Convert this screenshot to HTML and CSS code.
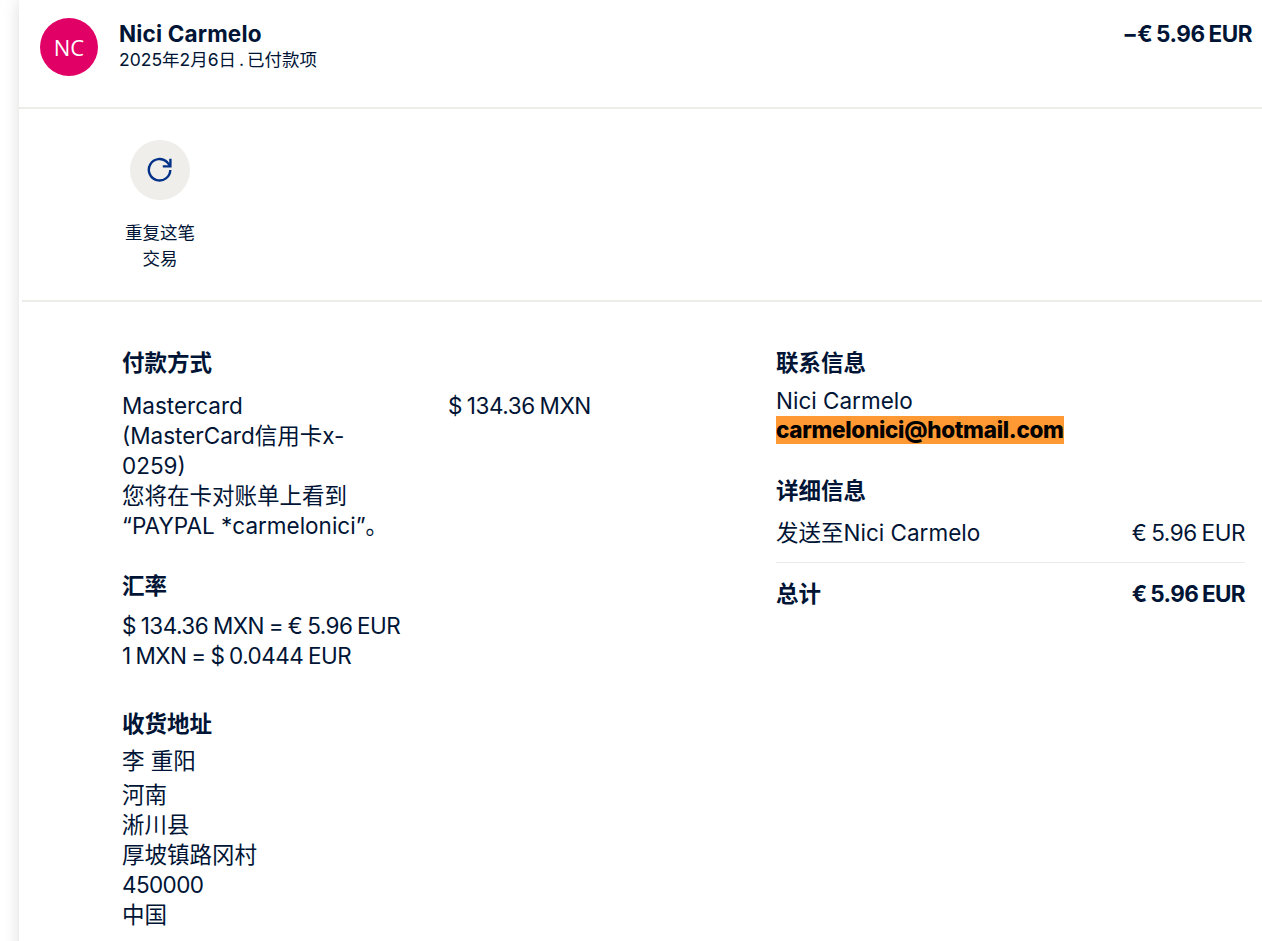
FILE: index.html
```html
<!DOCTYPE html>
<html lang="zh-CN">
<head>
    <meta charset="UTF-8">
    <meta name="viewport" content="width=device-width, initial-scale=1.0">
    <title>交易详情</title>
    <link rel="stylesheet" href="styles.css">
</head>
<body>
    <div class="panel">
        <header class="summary">
            <div class="avatar">NC</div>
            <div class="summary-text">
                <div class="summary-name">Nici Carmelo</div>
                <div class="summary-meta">2025年2月6日 . 已付款项</div>
            </div>
            <div class="summary-amount money">−€ 5.96 EUR</div>
        </header>

        <section class="actions">
            <div class="action">
                <div class="action-icon">
                    <svg width="26" height="26" viewBox="0 0 24 24" fill="none" stroke="#003087" stroke-width="2.2">
                        <path d="M21.5 12a9.9 9.9 0 1 1-2.9-7.2L21 7.6"/>
                        <path d="M21.6 1.6v7h-7"/>
                    </svg>
                </div>
                <div class="action-label">重复这笔交易</div>
            </div>
        </section>

        <main class="details">
            <div class="col-left">
                <section class="block">
                    <h3>付款方式</h3>
                    <div class="pay-row">
                        <p class="pay-card">Mastercard<br>(MasterCard信用卡x-<br>0259)<br>您将在卡对账单上看到<br>“PAYPAL *carmelonici”。</p>
                        <p class="pay-amount money">$ 134.36 MXN</p>
                    </div>
                </section>
                <section class="block block-rate">
                    <h3>汇率</h3>
                    <p class="money rate-text">$ 134.36 MXN = € 5.96 EUR<br>1 MXN = $ 0.0444 EUR</p>
                </section>
                <section class="block block-ship">
                    <h3>收货地址</h3>
                    <p class="ship-name">李 重阳</p>
                    <p>河南<br>淅川县<br>厚坡镇路冈村<br><span class="zip">450000</span><br>中国</p>
                </section>
            </div>
            <div class="col-right">
                <section class="block">
                    <h3>联系信息</h3>
                    <p>Nici Carmelo</p>
                    <p><mark class="email">carmelonici@hotmail.com</mark></p>
                </section>
                <section class="block block-info">
                    <h3>详细信息</h3>
                    <div class="line line-item">
                        <span>发送至Nici Carmelo</span>
                        <span class="money">€ 5.96 EUR</span>
                    </div>
                    <div class="line line-total">
                        <span>总计</span>
                        <span class="money">€ 5.96 EUR</span>
                    </div>
                </section>
            </div>
        </main>
    </div>
</body>
</html>
```

FILE: styles.css
```css
* {
    box-sizing: border-box;
}

html, body {
    height: 100%;
}

body {
    margin: 0;
    padding-left: 19px;
    background-color: #fff;
    color: #001435;
    font-family: Inter, "Liberation Sans", "Noto Sans CJK SC", sans-serif;
    font-size: 22.5px;
    line-height: 30px;
    overflow: hidden;
}

.panel {
    min-height: 100%;
    background: #fff;
    box-shadow: 0 0 16px rgba(0, 0, 0, 0.14);
}

.money {
    letter-spacing: -0.45px;
    word-spacing: -1px;
}

.zip {
    letter-spacing: -0.6px;
}

.summary {
    display: flex;
    height: 109px;
    padding: 19px 10px 0 21px;
    border-bottom: 2px solid #eeece8;
}

.avatar {
    display: flex;
    align-items: center;
    justify-content: center;
    flex: none;
    width: 58px;
    height: 58px;
    margin-top: -1px;
    margin-right: 21px;
    border-radius: 50%;
    background-color: #e10066;
    color: #fff;
    font-family: "Open Sans", sans-serif;
    font-size: 22px;
    font-weight: 500;
}

.summary-text {
    flex: 1;
}

.summary-name {
    font-size: 22.5px;
    font-weight: 700;
    line-height: 29px;
    letter-spacing: 0.15px;
}

.summary-meta {
    font-size: 17.5px;
    line-height: 24px;
    word-spacing: -2px;
}

.summary-amount {
    font-weight: 700;
    line-height: 29px;
}

.actions {
    height: 193px;
    margin-left: 3px;
    padding: 31px 0 0 101px;
    border-bottom: 2px solid #eeece8;
}

.action {
    width: 74px;
    text-align: center;
    font-size: 17.5px;
    line-height: 26px;
}

.action-icon {
    display: flex;
    align-items: center;
    justify-content: center;
    width: 60px;
    height: 60px;
    margin: 0 auto 20px;
    border-radius: 50%;
    background-color: #f0eeea;
}

.details {
    display: flex;
    padding: 46px 17px 0 103px;
}

.col-left {
    width: 654px;
    flex: none;
}

.col-right {
    flex: 1;
}

h3 {
    margin: 0 0 8px;
    font-size: 22.5px;
    font-weight: 700;
    line-height: 30px;
}

p {
    margin: 0;
}

.block {
    margin-bottom: 30px;
}

.pay-row {
    display: flex;
    margin-top: 13px;
}

.pay-card {
    width: 326px;
    flex: none;
}

.block-rate {
    margin-bottom: 38px;
}

.block-rate h3 {
    margin-bottom: 10px;
}

.rate-text {
    letter-spacing: -0.53px;
}

.block-ship h3 {
    margin-bottom: 7px;
}

.ship-name {
    margin-bottom: 4px;
}

.email {
    display: inline-block;
    background-color: #ff9933;
    color: #000;
    font-weight: 800;
    line-height: 28px;
    letter-spacing: -0.3px;
    vertical-align: 1px;
}

.block-info h3 {
    margin-bottom: 12px;
}

.line {
    display: flex;
    justify-content: space-between;
}

.line-item {
    padding-bottom: 14px;
    border-bottom: 1px solid #eeece8;
}

.line-total {
    padding-top: 16px;
    font-weight: 700;
}

.line-total .money {
    letter-spacing: -0.6px;
}
```
